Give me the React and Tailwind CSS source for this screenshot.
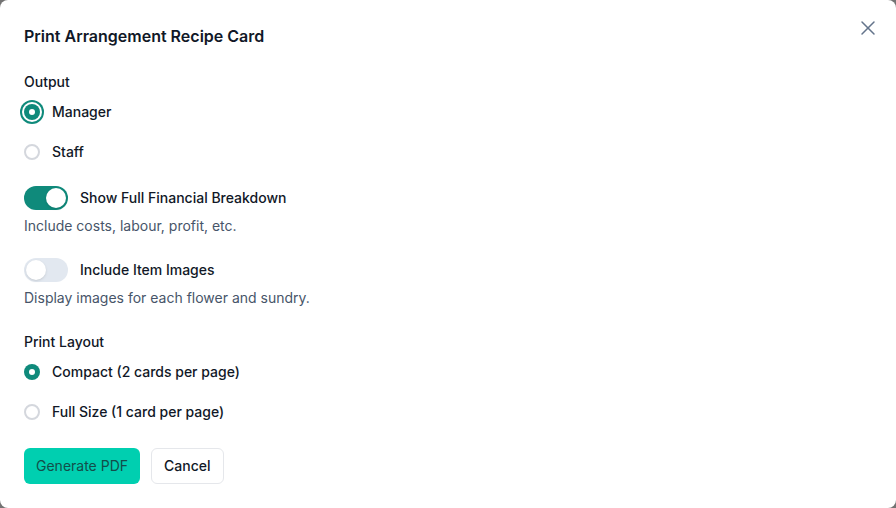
import React, { useState } from 'react';
import { X } from 'lucide-react';

const Radio = ({ checked, focused, label, onClick }) => (
  <button type="button" onClick={onClick} className="flex h-6 items-center gap-3 text-left">
    <span
      className={
        'flex h-4 w-4 items-center justify-center rounded-full ' +
        (checked ? 'bg-[#0f8a7b] ' : 'border-2 border-[#d4d7dd] bg-white ') +
        (focused ? 'ring-2 ring-[#0f8a7b] ring-offset-2' : '')
      }
    >
      {checked && <span className="h-1.5 w-1.5 rounded-full bg-white" />}
    </span>
    <span className="text-sm font-medium text-[#111827]">{label}</span>
  </button>
);

const Toggle = ({ on, onClick, label }) => (
  <button type="button" onClick={onClick} className="flex items-center gap-3">
    <span
      className={
        'flex h-6 w-11 items-center rounded-full p-0.5 ' +
        (on ? 'justify-end bg-[#0f8a7b]' : 'justify-start bg-[#e2e8f0]')
      }
    >
      <span className="h-5 w-5 rounded-full bg-white shadow-sm" />
    </span>
    <span className="text-sm font-medium text-[#111827]">{label}</span>
  </button>
);

export default function App() {
  const [output, setOutput] = useState('manager');
  const [financial, setFinancial] = useState(true);
  const [images, setImages] = useState(false);
  const [layout, setLayout] = useState('compact');

  return (
    <div
      className="h-[508px] w-[896px] bg-[#737373]"
      style={{ fontFamily: 'Inter, "Noto Sans", sans-serif' }}
    >
      <div className="relative h-full w-full rounded-lg bg-white px-6 pt-6">
        <button type="button" className="absolute right-4 top-4 text-[#64748b]">
          <X size={24} strokeWidth={1.5} />
        </button>

        <h2 className="text-base font-semibold leading-6 text-[#111827]">Print Arrangement Recipe Card</h2>

        {/* output audience */}
        <p className="mt-6 text-sm font-medium leading-5 text-[#111827]">Output</p>
        <div className="mt-2 flex flex-col gap-4">
          <Radio checked={output === 'manager'} focused label="Manager" onClick={() => setOutput('manager')} />
          <Radio checked={output === 'staff'} label="Staff" onClick={() => setOutput('staff')} />
        </div>

        {/* options */}
        <div className="mt-[22px]">
          <Toggle on={financial} onClick={() => setFinancial(!financial)} label="Show Full Financial Breakdown" />
          <p className="mt-1.5 text-sm leading-5 text-[#475569]">Include costs, labour, profit, etc.</p>
        </div>
        <div className="mt-[22px]">
          <Toggle on={images} onClick={() => setImages(!images)} label="Include Item Images" />
          <p className="mt-1.5 text-sm leading-5 text-[#475569]">Display images for each flower and sundry.</p>
        </div>

        {/* layout */}
        <p className="mt-6 text-sm font-medium leading-5 text-[#111827]">Print Layout</p>
        <div className="mt-2 flex flex-col gap-4">
          <Radio checked={layout === 'compact'} label="Compact (2 cards per page)" onClick={() => setLayout('compact')} />
          <Radio checked={layout === 'full'} label="Full Size (1 card per page)" onClick={() => setLayout('full')} />
        </div>

        <div className="mt-6 flex gap-[11px]">
          <button type="button" className="h-9 rounded-md bg-[#00cfb0] px-3 text-sm text-[#134e4a]">
            Generate PDF
          </button>
          <button type="button" className="h-9 rounded-md border border-[#e5e7eb] bg-white px-3 text-sm font-medium text-[#111827]">
            Cancel
          </button>
        </div>
      </div>
    </div>
  );
}
